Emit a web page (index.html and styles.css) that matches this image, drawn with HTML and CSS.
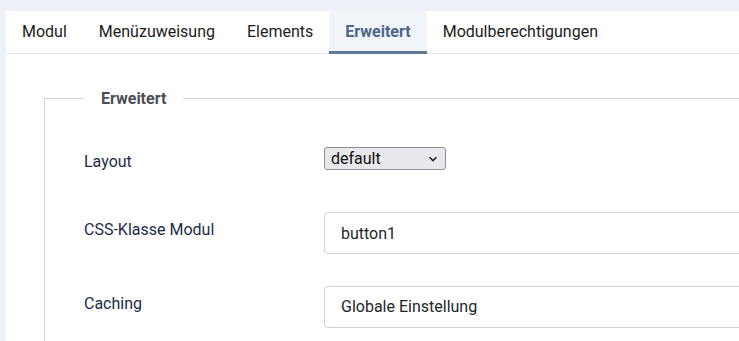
FILE: index.html
```html
<!DOCTYPE html>
<html lang="de">
  <head>
    <meta charset="UTF-8" />
    <meta name="viewport" content="width=device-width, initial-scale=1.0" />
    <title>Modul bearbeiten</title>
    <link rel="stylesheet" href="styles.css">
  </head>
  <body>
    <div class="card">
      <nav class="tabs">
        <a href="#" class="tab">Modul</a>
        <a href="#" class="tab">Menüzuweisung</a>
        <a href="#" class="tab">Elements</a>
        <a href="#" class="tab active">Erweitert</a>
        <a href="#" class="tab">Modulberechtigungen</a>
      </nav>

      <div class="tab-content">
        <fieldset class="options">
          <legend>Erweitert</legend>

          <div class="row row-select">
            <label for="layout">Layout</label>
            <div class="control">
              <div class="select">
                <span>default</span>
                <svg width="10" height="6" viewBox="0 0 10 6">
                  <path d="M1.5 1.2 L5 4.6 L8.5 1.2" fill="none" stroke="#222" stroke-width="1.5" />
                </svg>
              </div>
            </div>
          </div>

          <div class="row">
            <label for="moduleclass">CSS-Klasse Modul</label>
            <div class="control">
              <input id="moduleclass" class="input" type="text" value="button1" />
            </div>
          </div>

          <div class="row">
            <label for="caching">Caching</label>
            <div class="control">
              <div class="input">Globale Einstellung</div>
            </div>
          </div>
        </fieldset>
      </div>
    </div>
  </body>
</html>
```

FILE: styles.css
```css
body {
  font-family: Roboto, "Liberation Sans", sans-serif;
  font-size: 16px;
  background: #eef2f8;
  margin: 0;
  padding: 11px 0 0 6px;
  overflow: hidden;
  height: 341px;
  box-sizing: border-box;
}
.card {
  background: white;
  width: 1000px;
  min-height: 400px;
}
.tabs {
  display: flex;
  border-bottom: 1px solid #dfe3e8;
  height: 42px;
}
.tab {
  display: flex;
  align-items: center;
  padding: 0 16px;
  color: #1b1b1b;
  text-decoration: none;
  border-bottom: 3px solid transparent;
  margin-bottom: -1px;
}
.tab.active {
  background: #f1f4f8;
  color: #4b6689;
  font-weight: bold;
  border-bottom-color: #5f7a98;
}
.tab-content {
  padding: 35px 0 0 38px;
}
.options {
  border: 1px solid #c9d4de;
  border-right: none;
  border-bottom: none;
  margin: 0;
  padding: 33px 0 0 39px;
}
.options legend {
  font-size: 16px;
  font-weight: bold;
  color: #4a4f55;
  padding: 0 17px;
}
.row {
  display: flex;
  align-items: flex-start;
  margin-bottom: 32px;
}
.row label {
  width: 240px;
  flex-shrink: 0;
  padding-top: 6px;
  line-height: 24px;
  color: #1c2b48;
}
.row-select {
  margin-bottom: 38px;
}
.row-select label {
  padding-top: 9px;
}
.control {
  flex: 1;
}
.select {
  display: flex;
  align-items: center;
  justify-content: space-between;
  width: 122px;
  height: 23px;
  box-sizing: border-box;
  margin-top: 6px;
  padding: 0 7px 0 6px;
  background: #e9e9ed;
  border: 1px solid #8f8f9d;
  border-radius: 3px;
  color: #111;
  font-size: 16px;
}
.input {
  display: block;
  width: 100%;
  height: 42px;
  box-sizing: border-box;
  padding: 0 16px;
  border: 1px solid #cdd3da;
  border-radius: 4px;
  font-family: inherit;
  font-size: 16px;
  line-height: 40px;
  color: #22262a;
  background: white;
}
```
